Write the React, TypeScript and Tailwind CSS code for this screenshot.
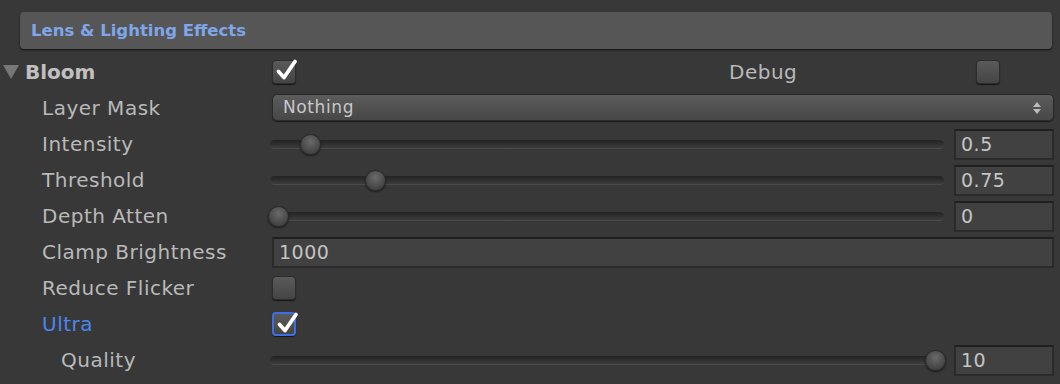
import type { ReactNode } from 'react'

const font = { fontFamily: '"DejaVu Sans", "Liberation Sans", sans-serif' }

function Check({ checked, focus }: { checked?: boolean; focus?: boolean }) {
  return (
    <div
      className={`relative w-[24px] h-[24px] rounded-[4px] bg-gradient-to-b from-[#5a5a5a] to-[#454545] shadow-[0_1px_1px_rgba(0,0,0,0.6)] ${
        focus ? 'border-2 border-[#3d6fe3]' : 'border border-[#2c2c2c]'
      }`}
    >
      {checked && (
        <svg viewBox="0 0 24 24" className="absolute left-[2px] -top-[3px] w-[24px] h-[24px]">
          <path d="M3.5 13.5 L9 19.5 L20 3.5" fill="none" stroke="#fff" strokeWidth="3.8" strokeLinecap="round" strokeLinejoin="round" />
        </svg>
      )}
    </div>
  )
}

// thumb overhangs the track ends by a couple of pixels, like the reference
function Slider({ pos }: { pos: number }) {
  return (
    <div className="relative flex-1 h-[22px] flex items-center ml-[-2px] mr-[10px]">
      <div className="w-full h-[9px] rounded-full bg-gradient-to-b from-[#232323] to-[#3c3c3c] border-b border-[#4a4a4a]" />
      <div
        className="absolute top-[1px] w-[21px] h-[21px] rounded-full bg-[radial-gradient(circle_at_50%_35%,#6a6a6a,#444_70%)] border border-[#2a2a2a] shadow-[0_1px_2px_rgba(0,0,0,0.6)]"
        style={{ left: `calc(${pos * 100}% - ${2 + pos * 17}px)` }}
      />
    </div>
  )
}

function NumField({ value, wide }: { value: string; wide?: boolean }) {
  return (
    <div
      className={`${wide ? 'flex-1' : 'w-[100px]'} h-[31px] bg-[#414141] border-2 border-[#2b2b2b] border-t-[#202020] flex items-center pl-[5px] text-[19px] tracking-[0.5px] text-[#c4c4c4]`}
    >
      {value}
    </div>
  )
}

function Row({ label, indent = 42, color = 'text-[#b9b9b9]', children }: { label: ReactNode; indent?: number; color?: string; children?: ReactNode }) {
  return (
    <div className="flex items-center h-[36px]">
      <div className={`w-[272px] shrink-0 text-[20px] tracking-[0.5px] ${color}`} style={{ paddingLeft: indent }}>
        {label}
      </div>
      <div className="flex-1 flex items-center pr-[6px]">{children}</div>
    </div>
  )
}

export default function App() {
  return (
    <div className="w-[1060px] h-[384px] bg-[#383838] overflow-hidden" style={font}>
      <div className="pt-[12px] pl-[20px] pr-[8px]">
        <div className="h-[37px] rounded-[4px] bg-[#565656] shadow-[0_1px_2px_rgba(0,0,0,0.7)] flex items-center pl-[11px] pt-[1px] text-[16.5px] font-bold text-[#7fa6e8]">
          Lens &amp; Lighting Effects
        </div>
      </div>
      <div className="pt-[5px]">
        <div className="flex items-center h-[36px]">
          <div className="w-[272px] shrink-0 flex items-center text-[20px] font-bold text-[#c0c0c0]">
            <svg viewBox="0 0 16 14" className="w-[16px] h-[14px] ml-[3px] mr-[6px]">
              <path d="M0 0 H16 L8 14 Z" fill="#777" />
            </svg>
            Bloom
          </div>
          <div className="flex-1 flex items-center">
            <Check checked />
            <div className="ml-[433px] w-[247px] text-[20px] tracking-[0.5px] text-[#b9b9b9]">Debug</div>
            <Check />
          </div>
        </div>
        <Row label="Layer Mask">
          <div className="flex-1 h-[27px] rounded-[5px] bg-gradient-to-b from-[#5c5c5c] to-[#474747] border border-[#2a2a2a] shadow-[0_1px_1px_rgba(0,0,0,0.5)] flex items-center justify-between pl-[10px] pr-[12px] text-[17px] tracking-[0.6px] text-[#c8c8c8] mt-[-1px]">
            <span>Nothing</span>
            <svg viewBox="0 0 8 12" className="w-[8px] h-[12px]">
              <path d="M4 0 L8 5 H0 Z M4 12 L8 7 H0 Z" fill="#bbb" />
            </svg>
          </div>
        </Row>
        <Row label="Intensity">
          <Slider pos={0.048} />
          <NumField value="0.5" />
        </Row>
        <Row label="Threshold">
          <Slider pos={0.148} />
          <NumField value="0.75" />
        </Row>
        <Row label="Depth Atten">
          <Slider pos={0} />
          <NumField value="0" />
        </Row>
        <Row label="Clamp Brightness">
          <NumField value="1000" wide />
        </Row>
        <Row label="Reduce Flicker">
          <Check />
        </Row>
        <Row label="Ultra" color="text-[#4a86f2]">
          <Check checked focus />
        </Row>
        <Row label="Quality" indent={61}>
          <Slider pos={1} />
          <NumField value="10" />
        </Row>
      </div>
    </div>
  )
}
